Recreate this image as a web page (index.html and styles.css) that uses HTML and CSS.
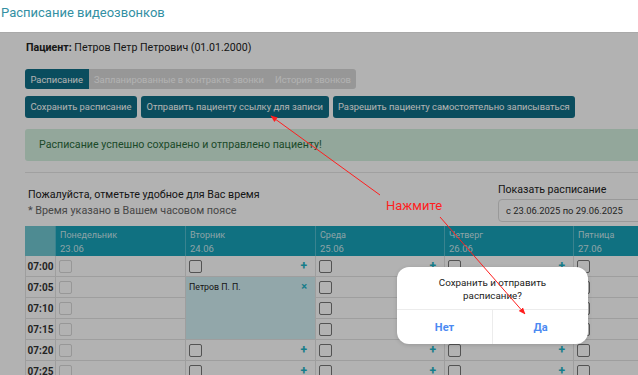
FILE: index.html
```html
<!DOCTYPE html>
<html lang="ru">
<head>
<meta charset="utf-8">
<title>Расписание видеозвонков</title>
<link rel="stylesheet" href="styles.css">
</head>
<body>
<div class="title">Расписание видеозвонков</div>
<div class="card">
  <div class="patient"><b>Пациент:</b> Петров Петр Петрович (01.01.2000)</div>
  <div class="tabs">
    <span class="tab active">Расписание</span><span class="tab">Запланированные в контракте звонки</span><span class="tab">История звонков</span>
  </div>
  <div class="actions">
    <button class="btn">Сохранить расписание</button>
    <button class="btn">Отправить пациенту ссылку для записи</button>
    <button class="btn">Разрешить пациенту самостоятельно записываться</button>
  </div>
  <div class="alert">Расписание успешно сохранено и отправлено пациенту!</div>
  <hr class="sep">
  <div class="info">
    <div class="hint">
      <div class="hint-main">Пожалуйста, отметьте удобное для Вас время</div>
      <div class="hint-sub">* Время указано в Вашем часовом поясе</div>
    </div>
    <div class="range">
      <div class="range-label">Показать расписание</div>
      <div class="range-input">с 23.06.2025 по 29.06.2025</div>
    </div>
  </div>
  <div class="grid">
    <div class="hd hd-time"></div>
    <div class="hd"><div class="hd-day">Понедельник</div><div class="hd-date">23.06</div></div>
    <div class="hd"><div class="hd-day">Вторник</div><div class="hd-date">24.06</div></div>
    <div class="hd"><div class="hd-day">Среда</div><div class="hd-date">25.06</div></div>
    <div class="hd"><div class="hd-day">Четверг</div><div class="hd-date">26.06</div></div>
    <div class="hd"><div class="hd-day">Пятница</div><div class="hd-date">27.06</div></div>

    <div class="tm">07:00</div>
    <div class="cell"><span class="cb off"></span></div>
    <div class="cell"><span class="cb"></span><span class="plus">+</span></div>
    <div class="cell"><span class="cb"></span><span class="plus">+</span></div>
    <div class="cell"><span class="cb"></span><span class="plus">+</span></div>
    <div class="cell"><span class="cb"></span><span class="plus">+</span></div>

    <div class="tm">07:05</div>
    <div class="cell"><span class="cb off"></span></div>
    <div class="cell booked"><span class="who">Петров П. П.</span><span class="del">×</span></div>
    <div class="cell"><span class="cb"></span><span class="plus">+</span></div>
    <div class="cell"><span class="cb"></span><span class="plus">+</span></div>
    <div class="cell"><span class="cb"></span><span class="plus">+</span></div>

    <div class="tm">07:10</div>
    <div class="cell"><span class="cb off"></span></div>
    <div class="cell"><span class="cb"></span><span class="plus">+</span></div>
    <div class="cell"><span class="cb"></span><span class="plus">+</span></div>
    <div class="cell"><span class="cb"></span><span class="plus">+</span></div>

    <div class="tm">07:15</div>
    <div class="cell"><span class="cb off"></span></div>
    <div class="cell"><span class="cb"></span><span class="plus">+</span></div>
    <div class="cell"><span class="cb"></span><span class="plus">+</span></div>
    <div class="cell"><span class="cb"></span><span class="plus">+</span></div>

    <div class="tm">07:20</div>
    <div class="cell"><span class="cb off"></span></div>
    <div class="cell"><span class="cb"></span><span class="plus">+</span></div>
    <div class="cell"><span class="cb"></span><span class="plus">+</span></div>
    <div class="cell"><span class="cb"></span><span class="plus">+</span></div>
    <div class="cell"><span class="cb"></span><span class="plus">+</span></div>

    <div class="tm">07:25</div>
    <div class="cell"><span class="cb off"></span></div>
    <div class="cell"><span class="cb"></span><span class="plus">+</span></div>
    <div class="cell"><span class="cb"></span><span class="plus">+</span></div>
    <div class="cell"><span class="cb"></span><span class="plus">+</span></div>
    <div class="cell"><span class="cb"></span><span class="plus">+</span></div>
  </div>
</div>

<div class="overlay"></div>

<div class="dialog">
  <div class="dialog-msg">Сохранить и отправить расписание?</div>
  <div class="dialog-btns">
    <span class="dialog-btn">Нет</span>
    <span class="dialog-btn">Да</span>
  </div>
</div>

<svg class="annot" width="638" height="375" viewBox="0 0 638 375">
  <defs>
    <marker id="ah" viewBox="0 0 10 10" refX="9" refY="5" markerWidth="7" markerHeight="7" orient="auto-start-reverse">
      <path d="M0 1 L10 5 L0 9 Z" fill="#ff1e1e"/>
    </marker>
  </defs>
  <line x1="380" y1="195" x2="271" y2="116" stroke="#ff1e1e" stroke-width="1" marker-end="url(#ah)"/>
  <line x1="440" y1="217" x2="525" y2="314" stroke="#ff1e1e" stroke-width="1" marker-end="url(#ah)"/>
</svg>
<div class="annot-label">Нажмите</div>
</body>
</html>
```

FILE: styles.css
```css
html, body {
  margin: 0;
  padding: 0;
  width: 638px;
  height: 375px;
  overflow: hidden;
  background: #ffffff;
  font-family: Roboto, "Noto Sans", "DejaVu Sans", sans-serif;
  color: #222;
}

.title {
  height: 32px;
  box-sizing: border-box;
  padding: 5px 0 0 1px;
  font-size: 13px;
  line-height: 16px;
  color: #3390a3;
}

.card {
  width: 820px;
  box-sizing: border-box;
  padding: 6px 0 0 25px;
  border-top: 1px solid #f2f2f2;
  background: #ffffff;
}

.patient {
  padding-left: 1px;
  font-size: 10.6px;
  line-height: 18px;
  color: #222;
}
.patient b { font-weight: 700; }

.tabs {
  display: flex;
  margin-top: 12px;
  height: 20px;
}
.tab {
  display: flex;
  align-items: center;
  padding: 0 5.5px;
  font-size: 9.4px;
  background: #d9d9d9;
  color: #ffffff;
}
.tab.active {
  background: #0f6f87;
  border-radius: 3px 0 0 3px;
}
.tab:last-child { border-radius: 0 3px 3px 0; }

.actions {
  display: flex;
  gap: 4px;
  margin-top: 7px;
}
.btn {
  height: 22px;
  padding: 0 5.5px;
  border: none;
  border-radius: 3px;
  background: #0f6f87;
  color: #ffffff;
  font-family: inherit;
  font-size: 9.4px;
  line-height: 22px;
}

.alert {
  margin-top: 11px;
  height: 32px;
  box-sizing: border-box;
  padding-left: 14px;
  border-radius: 3px 0 0 3px;
  background: #d3efdf;
  color: #2a6b3b;
  font-size: 10.65px;
  line-height: 32px;
}

.sep {
  margin: 11px 0 0 0;
  border: none;
  border-top: 1px solid #e6e6e6;
  height: 0;
}

.info {
  display: flex;
  align-items: flex-start;
}
.hint {
  width: 470px;
  padding: 14px 0 0 3px;
}
.hint-main {
  font-size: 10.7px;
  line-height: 16px;
  color: #222;
}
.hint-sub {
  font-size: 10.8px;
  line-height: 16px;
  color: #666;
}
.range {
  padding-top: 9px;
}
.range-label {
  font-size: 10.6px;
  line-height: 16px;
  color: #222;
}
.range-input {
  margin-top: 1px;
  width: 200px;
  height: 23px;
  box-sizing: border-box;
  padding-left: 7px;
  border: 1px solid #dcdcdc;
  border-radius: 4px;
  font-size: 9.4px;
  line-height: 21px;
  color: #333;
  background: #fff;
}

.grid {
  margin-top: 4px;
  display: grid;
  grid-template-columns: 30px 130px 130px 129px 129px 130px;
  grid-template-rows: 30px;
  grid-auto-rows: 21px;
}
.hd {
  background: #17a3b9;
  border-left: 1px solid #53bccd;
  padding: 3px 0 0 4px;
  color: rgba(255, 255, 255, 0.78);
}
.hd-time {
  background: #70c7d1;
  border-left: none;
}
.hd-day {
  font-size: 9px;
  line-height: 13px;
}
.hd-date {
  font-size: 9.5px;
  line-height: 14px;
}

.tm {
  display: flex;
  align-items: center;
  justify-content: center;
  border-bottom: 1px solid #e2e2e2;
  border-left: 1px solid #e2e2e2;
  font-size: 10px;
  font-weight: 700;
  color: #333;
  background: #fff;
}
.cell {
  display: flex;
  align-items: center;
  justify-content: space-between;
  padding: 0 8px 0 3px;
  border-bottom: 1px solid #e2e2e2;
  border-left: 1px solid #e2e2e2;
  background: #fff;
}
.cb {
  width: 11px;
  height: 11px;
  border: 1px solid #777;
  border-radius: 2px;
  background: #fff;
}
.cb.off { border-color: #d8d8d8; }
.plus {
  color: #1fb3c6;
  font-size: 12px;
  font-weight: 700;
  line-height: 12px;
}
.booked {
  grid-row: span 3;
  align-items: flex-start;
  padding-top: 3px;
  background: #d2eff4;
}
.who {
  font-size: 8.8px;
  line-height: 14px;
  color: #222;
}
.del {
  color: #1fb3c6;
  font-size: 11px;
  line-height: 14px;
  font-weight: 700;
}

.overlay {
  position: absolute;
  top: 32px;
  left: 0;
  right: 0;
  bottom: 0;
  background: rgba(0, 0, 0, 0.3);
}

.dialog {
  position: absolute;
  left: 397px;
  top: 267px;
  width: 191px;
  height: 77px;
  background: #ffffff;
  border-radius: 12px;
  box-shadow: 0 1px 4px rgba(0, 0, 0, 0.15);
  display: flex;
  flex-direction: column;
  overflow: hidden;
}
.dialog-msg {
  height: 43px;
  box-sizing: border-box;
  padding: 9px 40px 0;
  text-align: center;
  font-size: 9.8px;
  line-height: 13px;
  color: #222;
  border-bottom: 1px solid #ececec;
}
.dialog-btns {
  flex: 1;
  display: flex;
}
.dialog-btn {
  flex: 1;
  display: flex;
  align-items: center;
  justify-content: center;
  font-size: 11px;
  font-weight: 700;
  color: #4b8af2;
}
.dialog-btn + .dialog-btn { border-left: 1px solid #ececec; }

.annot {
  position: absolute;
  left: 0;
  top: 0;
  pointer-events: none;
}
.annot-label {
  position: absolute;
  left: 386px;
  top: 198px;
  font-size: 13px;
  line-height: 16px;
  color: #ff1e1e;
}
```
